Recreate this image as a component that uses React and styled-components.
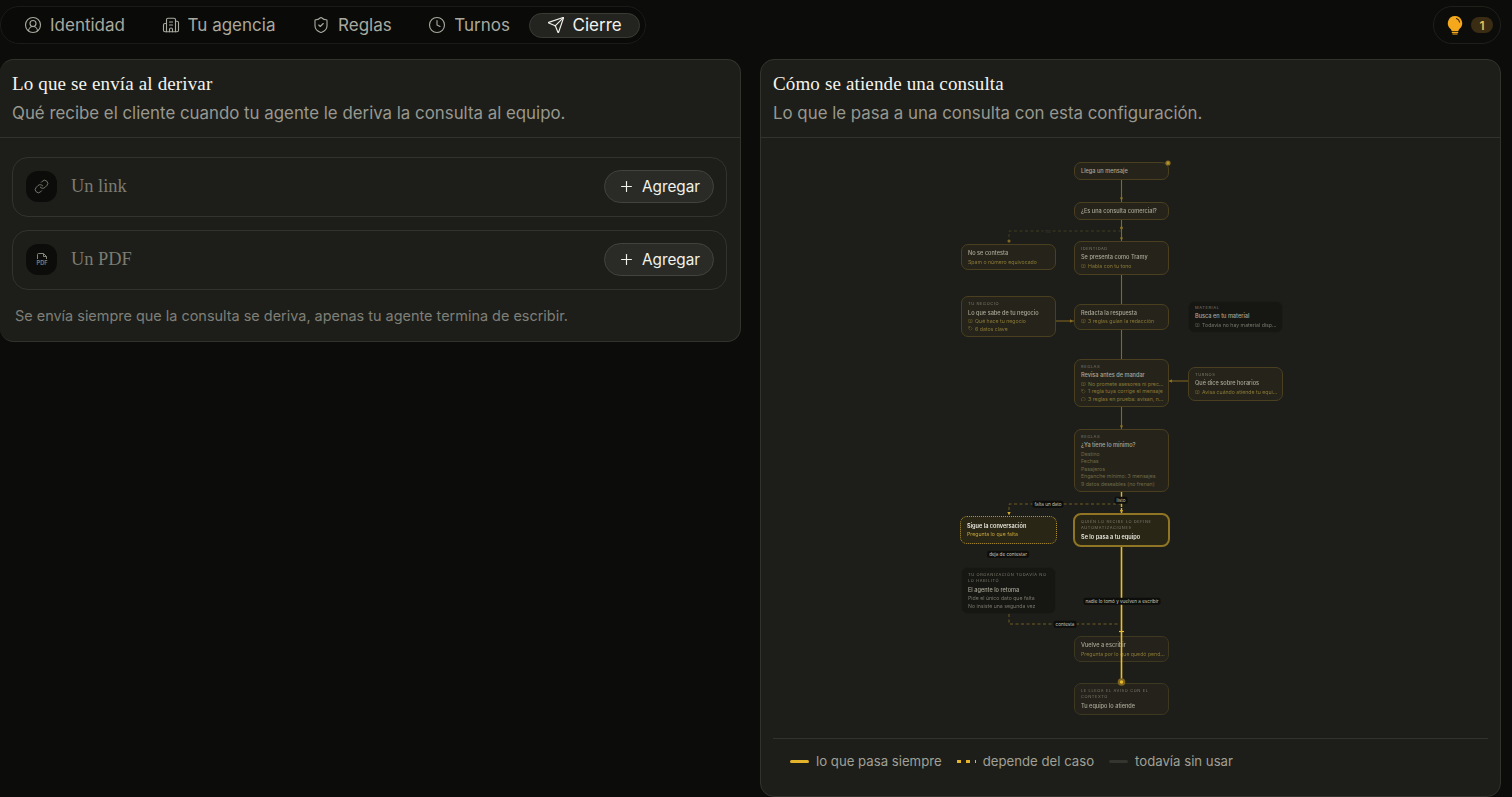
import React from 'react';
import styled, { createGlobalStyle, css } from 'styled-components';
import { CircleUserRound, Building2, ShieldCheck, Clock, Send, Link, Plus, BookOpen, MessageCircle, Tag } from 'lucide-react';

const GlobalStyle = createGlobalStyle`
  html, body { margin: 0; height: 100%; background: #0c0d0a; }
  body { font-family: Inter, "Liberation Sans", sans-serif; overflow: hidden; }
  * { box-sizing: border-box; }
`;

const tabs = [
  { label: 'Identidad', icon: CircleUserRound },
  { label: 'Tu agencia', icon: Building2 },
  { label: 'Reglas', icon: ShieldCheck },
  { label: 'Turnos', icon: Clock },
  { label: 'Cierre', icon: Send, active: true },
];

const nodes = [
  { x: 119, y: 7, w: 95, h: 18, title: 'Llega un mensaje' },
  { x: 119, y: 47, w: 95, h: 18, title: '¿Es una consulta comercial?' },
  { x: 6, y: 89, w: 95, h: 26, title: 'No se contesta', lines: ['Spam o número equivocado'], noIcon: true, accent: true },
  { x: 119, y: 85.5, w: 95, h: 34, eyebrow: 'IDENTIDAD', title: 'Se presenta como Tramy', lines: ['Habla con tu tono'], accent: true },
  { x: 6, y: 141, w: 95, h: 41, eyebrow: 'TU NEGOCIO', title: 'Lo que sabe de tu negocio', lines: ['Qué hace tu negocio', '6 datos clave'], accent: true },
  { x: 119, y: 148.5, w: 95, h: 26, title: 'Redacta la respuesta', lines: ['3 reglas guían la redacción'], accent: true },
  { x: 233, y: 145.5, w: 95, h: 32, eyebrow: 'MATERIAL', title: 'Busca en tu material', lines: ['Todavía no hay material disp...'], kind: 'idle' },
  { x: 119, y: 204, w: 95, h: 48, eyebrow: 'REGLAS', title: 'Revisa antes de mandar', lines: ['No promete asesores ni prec...', '1 regla tuya corrige el mensaje', '3 reglas en prueba: avisan, n...'], accent: true },
  { x: 233, y: 211.5, w: 95, h: 34, eyebrow: 'TURNOS', title: 'Qué dice sobre horarios', lines: ['Avisa cuándo atiende tu equi...'], accent: true },
  { x: 119, y: 274, w: 95, h: 63, eyebrow: 'REGLAS', title: '¿Ya tiene lo mínimo?', lines: ['Destino', 'Fechas', 'Pasajeros', 'Enganche mínimo: 3 mensajes', '9 datos deseables (no frenan)'], noIcon: true },
  { x: 5, y: 360.5, w: 97, h: 28, title: 'Sigue la conversación', lines: ['Pregunta lo que falta'], noIcon: true, kind: 'dotted' },
  { x: 118, y: 358, w: 97, h: 34, eyebrow: 'QUIÉN LO RECIBE LO DEFINE AUTOMATIZACIONES', title: 'Se lo pasa a tu equipo', kind: 'strong' },
  { x: 6, y: 412, w: 95, h: 47, eyebrow: 'TU ORGANIZACIÓN TODAVÍA NO LO HABILITÓ', title: 'El agente lo retoma', lines: ['Pide el único dato que falta', 'No insiste una segunda vez'], noIcon: true, kind: 'idle' },
  { x: 119, y: 481, w: 95, h: 26, title: 'Vuelve a escribir', lines: ['Pregunta por lo que quedó pend...'], noIcon: true, accent: true, kind: 'faint' },
  { x: 119, y: 528, w: 95, h: 32, eyebrow: 'LE LLEGA EL AVISO CON EL CONTEXTO', title: 'Tu equipo lo atiende', kind: 'faint' },
];

const chips = [
  { x: 93, y: 76, label: 'no', dim: true },
  { x: 93, y: 349, label: 'falta un dato' },
  { x: 166, y: 345, label: 'listo' },
  { x: 53, y: 399, label: 'deja de contestar' },
  { x: 167, y: 446, label: 'nadie lo tomó y vuelven a escribir' },
  { x: 110, y: 469, label: 'contesta' },
];

const lineIcons = [BookOpen, Tag, MessageCircle];

function FlowEdges() {
  return (
    <EdgeLayer viewBox="0 0 330 570" fill="none">
      <g stroke="#86691f" strokeWidth="1.1">
        <path d="M166.5 25V47M166.5 65V86M166.5 120V149M166.5 175V204M166.5 252V274M101 166H119M214 226H233" />
      </g>
      <g fill="#8c7124">
        <path d="M164.8 42.5h3.4l-1.7 3zM164.8 82.5h3.4l-1.7 3zM164.8 270.5h3.4l-1.7 3zM115 164.3v3.4l3-1.7zM217 224.3v3.4l-3-1.7z" />
        <circle cx="166.5" cy="73" r="1.4" />
        <circle cx="54" cy="86" r="1.5" />
        <circle cx="213" cy="8" r="2.6" />
      </g>
      <circle cx="213" cy="8" r="1.2" fill="#b8962c" />
      <g stroke="#5d5024" strokeWidth="0.6" strokeDasharray="3 2.5">
        <path d="M166.5 76H54V88" />
      </g>
      <g stroke="#94792a" strokeWidth="0.7" strokeDasharray="3 2.5">
        <path d="M166.5 349H54V360" />
        <path d="M54 459V469H163" />
      </g>
      <path d="M166.5 337V358" stroke="#e3b32b" strokeWidth="1.4" strokeDasharray="7 1" />
      <path d="M166.5 392V527" stroke="#eebb2c" strokeWidth="1.6" />
      <path d="M164 476.5h5" stroke="#e9b92e" strokeWidth="1.2" />
      <circle cx="166.5" cy="527" r="3.8" fill="#7d651f" />
      <circle cx="166.5" cy="527" r="1.7" fill="#e9b92e" />
      <path d="M164.8 355h3.4l-1.7 3zM52.3 357h3.4l-1.7 3z" fill="#d5a92a" />
    </EdgeLayer>
  );
}

export default function App() {
  return (
    <>
      <GlobalStyle />
      <Page>
        <TopBar>
          <TabStrip>
            {tabs.map(({ label, icon: Icon, active }) => (
              <Tab key={label} $active={active}>
                <Icon size={18} strokeWidth={1.5} />
                {label}
              </Tab>
            ))}
          </TabStrip>
          <TipsPill>
            <svg width="18" height="20" viewBox="0 0 18 20" fill="none">
              <path d="M9 1a7.2 7.2 0 0 0-4.4 12.9c.7.6 1 1.2 1 2.1h6.8c0-.9.3-1.5 1-2.1A7.2 7.2 0 0 0 9 1z" fill="#f5a81c" />
              <path d="M10.5 3.6c1.6.5 2.8 1.8 3.1 3.5" stroke="#3a2808" strokeWidth="1.1" strokeLinecap="round" />
              <path d="M5.8 17.3h6.4M6.4 19h5.2" stroke="#f5a81c" strokeWidth="1.2" />
            </svg>
            <TipCount>1</TipCount>
          </TipsPill>
        </TopBar>
        <Columns>
          <LeftCard>
            <CardHeader>
              <CardTitle>Lo que se envía al derivar</CardTitle>
              <CardSub>Qué recibe el cliente cuando tu agente le deriva la consulta al equipo.</CardSub>
            </CardHeader>
            <AttachList>
              <AttachRow>
                <AttachIcon><Link size={15} strokeWidth={1.4} /></AttachIcon>
                <AttachName>Un link</AttachName>
                <AddButton><Plus size={17} strokeWidth={1.6} />Agregar</AddButton>
              </AttachRow>
              <AttachRow>
                <AttachIcon>
                  <svg width="16" height="16" viewBox="0 0 16 16" fill="none" stroke="currentColor" strokeWidth="1">
                    <path d="M3.5 7V2.5a1 1 0 0 1 1-1h5l3 3V7M9.5 1.5v3h3" />
                    <text x="8" y="13" textAnchor="middle" fontSize="5.6" fill="currentColor" stroke="none" fontFamily="Inter, sans-serif" fontWeight="600">PDF</text>
                  </svg>
                </AttachIcon>
                <AttachName>Un PDF</AttachName>
                <AddButton><Plus size={17} strokeWidth={1.6} />Agregar</AddButton>
              </AttachRow>
              <Footnote>Se envía siempre que la consulta se deriva, apenas tu agente termina de escribir.</Footnote>
            </AttachList>
          </LeftCard>
          <RightCard>
            <CardHeader>
              <CardTitle>Cómo se atiende una consulta</CardTitle>
              <CardSub>Lo que le pasa a una consulta con esta configuración.</CardSub>
            </CardHeader>
            <DiagramArea>
              <Canvas>
                {nodes.map((n) => (
                  <Node key={n.title + n.y} $x={n.x} $y={n.y} $w={n.w} $h={n.h} $kind={n.kind}>
                    {n.eyebrow && <Eyebrow>{n.eyebrow}</Eyebrow>}
                    <NodeTitle $kind={n.kind}>{n.title}</NodeTitle>
                    {n.lines && n.lines.map((line, i) => {
                      const LineIcon = lineIcons[i % lineIcons.length];
                      return (
                        <NodeLine key={line} $accent={n.accent} $kind={n.kind}>
                          {!n.noIcon && <LineIcon size={4.6} strokeWidth={2} />}
                          <span>{line}</span>
                        </NodeLine>
                      );
                    })}
                  </Node>
                ))}
                <FlowEdges />
                {chips.map((c) => (
                  <Chip key={c.label} $x={c.x} $y={c.y} $dim={c.dim}>{c.label}</Chip>
                ))}
              </Canvas>
            </DiagramArea>
            <Legend>
              <LegendItem><LegendSolid />lo que pasa siempre</LegendItem>
              <LegendItem><LegendDashed />depende del caso</LegendItem>
              <LegendItem><LegendIdle />todavía sin usar</LegendItem>
            </Legend>
          </RightCard>
        </Columns>
      </Page>
    </>
  );
}

const Page = styled.div`
  height: 797px;
  display: flex;
  flex-direction: column;
  padding-top: 6px;
  background: #0c0d0a;
`;

const TopBar = styled.div`
  display: flex;
  justify-content: space-between;
  align-items: center;
  padding-right: 11px;
  height: 38px;
`;

const TabStrip = styled.nav`
  display: flex;
  align-items: center;
  height: 38px;
  width: 646px;
  padding: 0 5px 0 10px;
  border: 1px solid #1b1c18;
  border-radius: 19px;
  background: #0a0b08;
`;

const Tab = styled.div`
  display: flex;
  align-items: center;
  justify-content: center;
  gap: 8px;
  height: 25px;
  padding: 0 13px;
  margin-right: 10.6px;
  font-size: 17px;
  color: #a9a99f;
  white-space: nowrap;

  ${({ $active }) => $active && css`
    margin: 0 0 0 -5px;
    padding: 0 17px;
    color: #f2f2ec;
    background: #23241f;
    border: 1px solid #3a3b35;
    border-radius: 13px;
  `}
`;

const TipsPill = styled.div`
  display: flex;
  align-items: center;
  gap: 7px;
  width: 68px;
  height: 38px;
  padding-left: 12px;
  border: 1px solid #1f201b;
  border-radius: 19px;
`;

const TipCount = styled.span`
  width: 22px;
  height: 16px;
  display: flex;
  align-items: center;
  justify-content: center;
  font-size: 12px;
  font-weight: 600;
  color: #e8c15a;
  background: #3a2d13;
  border-radius: 8px;
`;

const Columns = styled.div`
  flex: 1;
  display: flex;
  align-items: flex-start;
  gap: 19px;
  margin-top: 15px;
  min-height: 0;
  padding-right: 11px;
`;

const Card = styled.section`
  display: flex;
  flex-direction: column;
  background: #1d1e19;
  border: 1px solid #32332d;
  border-radius: 14px;
`;

const LeftCard = styled(Card)`
  width: 741px;
  height: 283px;
  border-left: none;
`;

const RightCard = styled(Card)`
  width: 741px;
  height: 738px;
`;

const CardHeader = styled.header`
  height: 78px;
  padding: 13px 12px 0;
  border-bottom: 1px solid #32332d;
`;

const CardTitle = styled.h2`
  margin: 0;
  font-family: "Liberation Serif", serif;
  font-weight: 400;
  font-size: 19px;
  letter-spacing: 0.14px;
  line-height: 22px;
  color: #f4f4ee;
`;

const CardSub = styled.p`
  margin: 7px 0 0;
  font-size: 16.85px;
  line-height: 22px;
  color: #989890;
`;

const AttachList = styled.div`
  display: flex;
  flex-direction: column;
  gap: 13px;
  padding: 19px 13px 0 12px;
`;

const AttachRow = styled.div`
  display: flex;
  align-items: center;
  height: 60px;
  padding: 0 12px 1px 13px;
  border: 1px solid #32332d;
  border-radius: 16px;
`;

const AttachIcon = styled.div`
  width: 31px;
  height: 31px;
  display: flex;
  align-items: center;
  justify-content: center;
  border-radius: 12px;
  background: #0c0d0a;
  color: #85857b;
`;

const AttachName = styled.span`
  flex: 1;
  margin-left: 14px;
  font-family: "Liberation Serif", serif;
  font-size: 18.4px;
  color: #7c7c72;
`;

const AddButton = styled.button`
  display: flex;
  align-items: center;
  gap: 7px;
  width: 110px;
  height: 33px;
  padding: 0 0 0 13px;
  font-family: inherit;
  font-size: 15.3px;
  color: #f2f2ec;
  background: #2a2b26;
  border: 1px solid #42433d;
  border-radius: 17px;
`;

const Footnote = styled.p`
  margin: 3px 0 0 3px;
  font-size: 14.45px;
  line-height: 20px;
  color: #7f7f77;
`;

const DiagramArea = styled.div`
  flex: 1;
  display: flex;
  justify-content: center;
  padding: 17px 21px 0 0;
  margin: 0 12px;
  border-bottom: 1px solid #32332d;
  min-height: 0;
`;

const Canvas = styled.div`
  position: relative;
  width: 330px;
  height: 570px;
  filter: blur(0.3px);
`;

const EdgeLayer = styled.svg`
  position: absolute;
  inset: 0;
  width: 330px;
  height: 570px;
  pointer-events: none;
`;

const nodeKinds = {
  idle: css`
    background: #161713;
    border: 0.7px solid #1b1c18;
  `,
  dotted: css`
    background: #2a2616;
    border: 1px dotted #b4922d;
  `,
  strong: css`
    background: #2a2616;
    border: 2px solid #8f7524;
    border-radius: 8px;
  `,
  faint: css`
    background: #24221a;
    border: 0.8px solid #3d3820;
  `,
};

const Node = styled.div`
  position: absolute;
  left: ${({ $x }) => $x}px;
  top: ${({ $y }) => $y}px;
  width: ${({ $w }) => $w}px;
  height: ${({ $h }) => $h}px;
  display: flex;
  flex-direction: column;
  justify-content: center;
  gap: 1.5px;
  padding: 0 6px;
  background: #26241a;
  border: 0.8px solid #4a4020;
  border-radius: 7px;
  overflow: hidden;
  ${({ $kind }) => nodeKinds[$kind]}
`;

const Eyebrow = styled.div`
  font-size: 4px;
  line-height: 5.8px;
  letter-spacing: 0.6px;
  color: #7c7a6c;
`;

const NodeTitle = styled.div`
  font-size: 5.6px;
  line-height: 8px;
  font-weight: ${({ $kind }) => ($kind === 'dotted' || $kind === 'strong' ? 600 : 500)};
  color: ${({ $kind }) => ($kind === 'dotted' || $kind === 'strong' ? '#e8e7dc' : '#a9a798')};
  white-space: nowrap;
`;

const NodeLine = styled.div`
  display: flex;
  align-items: center;
  gap: 2.5px;
  font-size: 5.2px;
  line-height: 6px;
  white-space: nowrap;
  color: ${({ $accent, $kind }) => {
    if ($kind === 'dotted') return '#c5a33a';
    if ($kind === 'idle') return '#77766a';
    return $accent ? '#8a7836' : '#6d6a48';
  }};

  svg { flex: none; }
`;

const Chip = styled.span`
  position: absolute;
  left: ${({ $x }) => $x}px;
  top: ${({ $y }) => $y}px;
  transform: translate(-50%, -50%);
  padding: 0.5px 2px;
  font-size: 4.6px;
  line-height: 5.6px;
  white-space: nowrap;
  color: ${({ $dim }) => ($dim ? '#3a3a32' : '#c8c7ba')};
  background: ${({ $dim }) => ($dim ? '#1d1e19' : '#0d0e0b')};
  border-radius: 2px;
`;

const Legend = styled.div`
  display: flex;
  align-items: center;
  gap: 15px;
  height: 57px;
  padding: 0 0 13px 29px;
`;

const LegendItem = styled.div`
  display: flex;
  align-items: center;
  gap: 7px;
  font-size: 13.2px;
  color: #a0a096;
`;

const LegendSolid = styled.i`
  width: 19px;
  height: 3px;
  border-radius: 2px;
  background: #e3b32b;
`;

const LegendDashed = styled.i`
  width: 19px;
  height: 3px;
  background: repeating-linear-gradient(90deg, #e3b32b 0 4px, transparent 4px 9px);
`;

const LegendIdle = styled.i`
  width: 19px;
  height: 3px;
  border-radius: 2px;
  background: #34352f;
`;
